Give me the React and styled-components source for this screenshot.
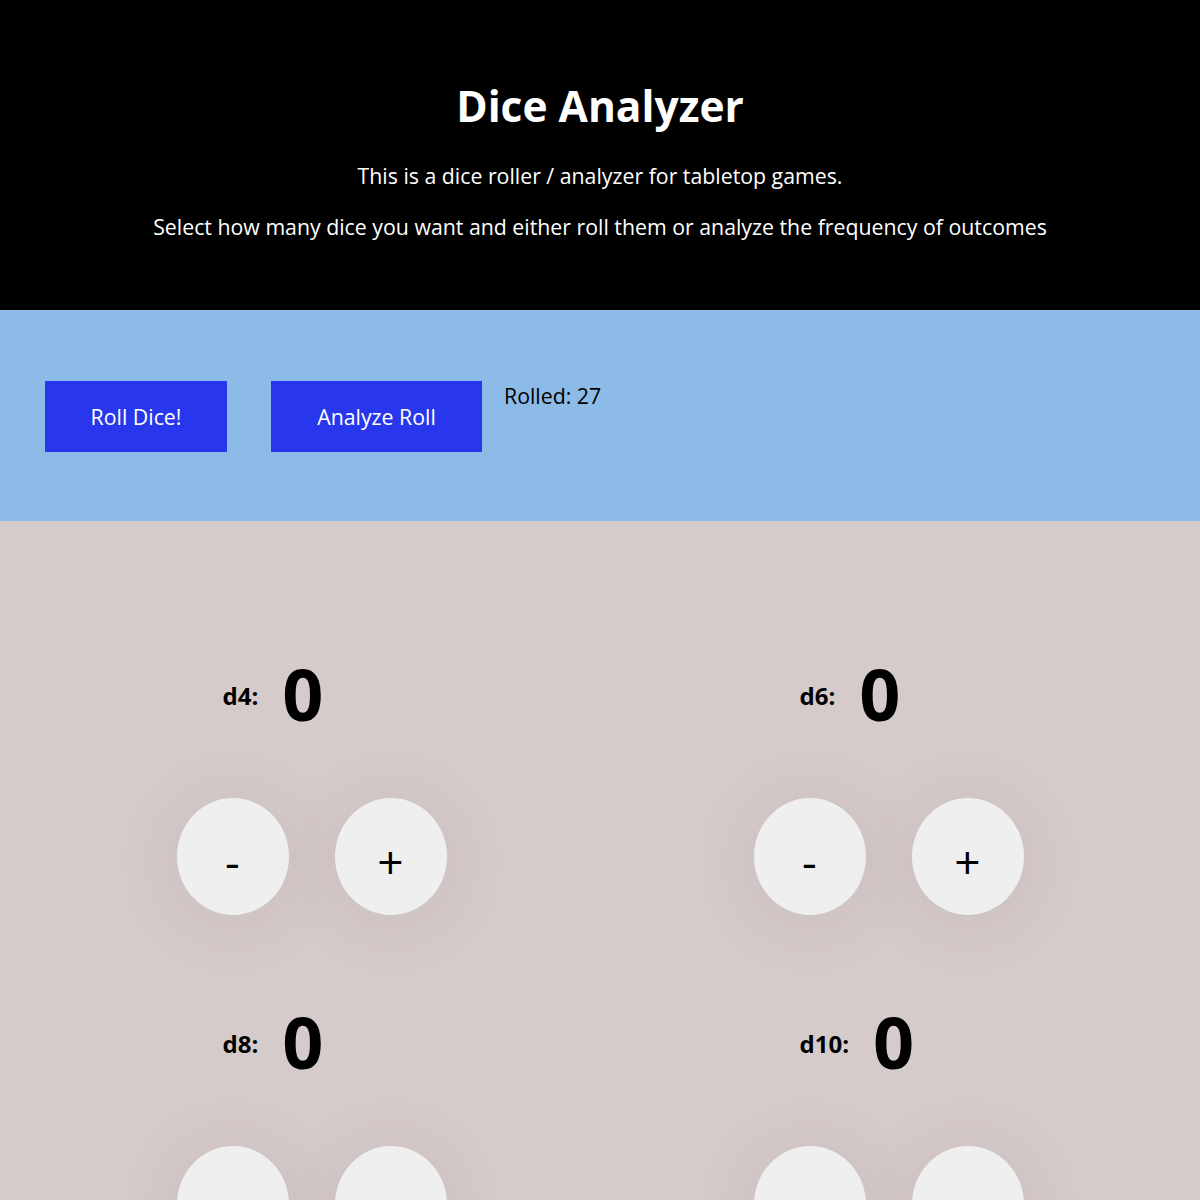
import React, { useState } from "react";
import styled, { createGlobalStyle } from "styled-components";

const GlobalStyle = createGlobalStyle`
    body {
        margin: 0;
        font-family: "Open Sans", "Noto Sans", sans-serif;
        background-color: #d5cbca;
    }
`;

const Header = styled.header`
    background-color: #000;
    color: #fff;
    height: 310px;
    box-sizing: border-box;
    padding-top: 77px;
    display: flex;
    flex-direction: column;
    align-items: center;
`;

const Title = styled.h1`
    font-size: 42.5px;
    font-weight: 700;
    margin: 0 0 26px 0;
    line-height: 58px;
`;

const Intro = styled.p`
    font-size: 21.3px;
    margin: 0 0 21px 0;
    line-height: 30px;
`;

const Controls = styled.section`
    background-color: #8cbbe7;
    height: 211px;
    box-sizing: border-box;
    padding: 71px 45px;
    display: flex;
    align-items: flex-start;
`;

const ActionButton = styled.button`
    background-color: #2837eb;
    color: #fff;
    border: none;
    height: 71px;
    width: ${(p) => p.$width}px;
    margin-right: ${(p) => p.$gap}px;
    font-family: inherit;
    font-size: 21.3px;
    cursor: pointer;
`;

const Rolled = styled.span`
    font-size: 21.3px;
    color: #000;
    line-height: 30px;
`;

const DiceGrid = styled.section`
    background-color: #d5cbca;
    padding: 132px 23px 40px;
    display: grid;
    grid-template-columns: 1fr 1fr;
    grid-auto-rows: 348px;
`;

const DiceCard = styled.div`
    display: flex;
    flex-direction: column;
    align-items: center;
`;

const CardHead = styled.div`
    width: 178px;
    display: flex;
    align-items: center;
    gap: 24px;
    height: 80px;
`;

const DieLabel = styled.span`
    font-size: 24px;
    font-weight: 700;
    margin-top: 4px;
`;

const Count = styled.span`
    font-size: 72px;
    font-weight: 700;
    line-height: 80px;
`;

const StepRow = styled.div`
    display: flex;
    gap: 46px;
    margin-top: 65px;
`;

const StepButton = styled.button`
    width: 112px;
    height: 117px;
    border-radius: 50%;
    border: none;
    padding: 8px 0 0 0;
    background-color: #efefef;
    box-shadow: 0 6px 70px rgba(90, 55, 55, 0.1);
    font-family: inherit;
    font-size: 46px;
    line-height: 1;
    color: #000;
    cursor: pointer;
`;

const DICE = ["d4", "d6", "d8", "d10", "d12", "d20"];

export default function App() {
    const [counts, setCounts] = useState(() => Object.fromEntries(DICE.map((d) => [d, 0])));

    const change = (die, step) =>
        setCounts((c) => ({ ...c, [die]: Math.max(0, c[die] + step) }));

    return (
        <>
            <GlobalStyle />
            <Header>
                <Title>Dice Analyzer</Title>
                <Intro>This is a dice roller / analyzer for tabletop games.</Intro>
                <Intro>Select how many dice you want and either roll them or analyze the frequency of outcomes</Intro>
            </Header>
            <Controls>
                <ActionButton $width={182} $gap={44}>Roll Dice!</ActionButton>
                <ActionButton $width={211} $gap={22}>Analyze Roll</ActionButton>
                <Rolled>Rolled: 27</Rolled>
            </Controls>
            <DiceGrid>
                {DICE.map((die) => (
                    <DiceCard key={die}>
                        <CardHead>
                            <DieLabel>{die}:</DieLabel>
                            <Count>{counts[die]}</Count>
                        </CardHead>
                        <StepRow>
                            <StepButton onClick={() => change(die, -1)}>-</StepButton>
                            <StepButton onClick={() => change(die, 1)}>+</StepButton>
                        </StepRow>
                    </DiceCard>
                ))}
            </DiceGrid>
        </>
    );
}
